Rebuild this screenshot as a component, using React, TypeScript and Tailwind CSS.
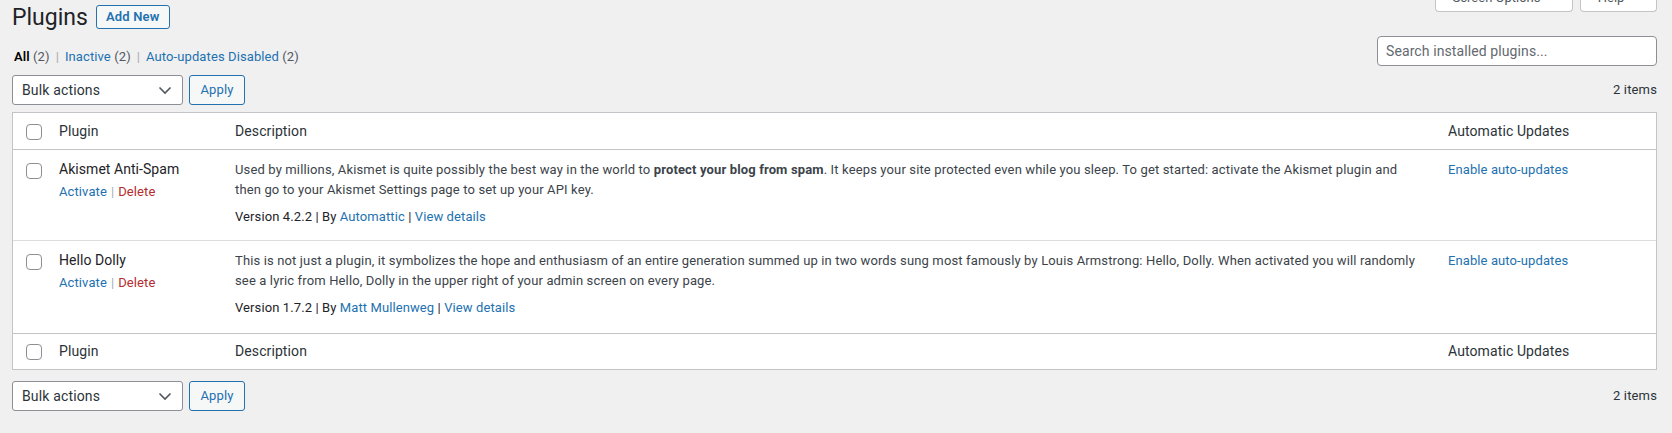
import React from "react";

interface Plugin {
  name: string;
  lines: React.ReactNode[];
  version: string;
  author: string;
  height: string;
  border: boolean;
}

const plugins: Plugin[] = [
  {
    name: "Akismet Anti-Spam",
    lines: [
      <>
        Used by millions, Akismet is quite possibly the best way in the world to{" "}
        <strong className="font-bold">protect your blog from spam</strong>. It keeps your site
        protected even while you sleep. To get started: activate the Akismet plugin and
      </>,
      <>then go to your Akismet Settings page to set up your API key.</>,
    ],
    version: "4.2.2",
    author: "Automattic",
    height: "h-[91px]",
    border: true,
  },
  {
    name: "Hello Dolly",
    lines: [
      <>
        This is not just a plugin, it symbolizes the hope and enthusiasm of an entire generation
        summed up in two words sung most famously by Louis Armstrong: Hello, Dolly. When activated
        you will randomly
      </>,
      <>see a lyric from Hello, Dolly in the upper right of your admin screen on every page.</>,
    ],
    version: "1.7.2",
    author: "Matt Mullenweg",
    height: "h-[92px]",
    border: false,
  },
];

const Checkbox = () => (
  <span className="block h-4 w-4 rounded-[4px] border border-[#8c8f94] bg-white" />
);

const Chevron = () => (
  <svg width="20" height="20" viewBox="0 0 20 20" fill="none">
    <path d="M4.5 7.5l5.5 5.5 5.5-5.5" stroke="#50575e" strokeWidth="1.6" />
  </svg>
);

const TableNav = () => (
  <div className="flex h-[30px] items-center justify-between">
    <div className="flex items-center gap-[6px]">
      <div className="flex h-[30px] w-[171px] items-center justify-between rounded-[3px] border border-[#8c8f94] bg-white pl-[9px] pr-[7px] text-[14px] tracking-[0.15px] text-[#2c3338]">
        <span>Bulk actions</span>
        <Chevron />
      </div>
      <button className="h-[30px] w-[56px] rounded-[3px] border border-[#2271b1] bg-[#f6f7f7] text-[13px] tracking-[0.15px] text-[#2271b1]">
        Apply
      </button>
    </div>
    <span className="text-[13px] tracking-[0.15px] text-[#2c3338]">2 items</span>
  </div>
);

const HeaderRow = ({ foot }: { foot?: boolean }) => (
  <div
    className={`grid grid-cols-[36px_176px_1fr_218px] text-[14px] tracking-[0.1px] text-[#2c3338] ${
      foot ? "h-[36px] border-t border-[#c3c4c7]" : "h-[37px] border-b border-[#c3c4c7]"
    }`}
  >
    <div className={`pl-[13px] ${foot ? "pt-[10px]" : "pt-[11px]"}`}>
      <Checkbox />
    </div>
    <div className="flex items-center px-[10px]">Plugin</div>
    <div className="flex items-center px-[10px]">Description</div>
    <div className="flex items-center px-[10px]">Automatic Updates</div>
  </div>
);

export default function App() {
  return (
    <div className="min-h-screen bg-[#f0f0f1] pl-[12px] pr-[15px] font-['Roboto',sans-serif] text-[13px] text-[#3c434a]">
      {/* Title + screen meta tabs */}
      <div className="flex items-start justify-between">
        <div className="flex h-[34px] items-center">
          <h1 className="text-[23px] font-normal leading-none text-[#1d2327]">Plugins</h1>
          <button className="ml-[8px] h-[24px] rounded-[3px] border border-[#2271b1] bg-[#f6f7f7] px-[9px] text-[13px] font-semibold tracking-[0.2px] text-[#2271b1]">
            Add New
          </button>
        </div>
        <div className="-mt-[16px] flex gap-[7px]">
          <div className="flex h-[28px] w-[138px] items-center justify-center gap-[6px] rounded-b-[4px] border border-t-0 border-[#c3c4c7] bg-white text-[13px] text-[#50575e]">
            Screen Options <span className="text-[9px]">▼</span>
          </div>
          <div className="flex h-[28px] w-[77px] items-center justify-center gap-[6px] rounded-b-[4px] border border-t-0 border-[#c3c4c7] bg-white text-[13px] text-[#50575e]">
            Help <span className="text-[9px]">▼</span>
          </div>
        </div>
      </div>

      {/* Filters + search */}
      <div className="flex items-start justify-between">
        <div className="mt-[10px] flex h-[26px] items-center text-[13px] tracking-[0.1px] text-[#50575e]">
          <span className="pl-[2px]">
            <span className="font-semibold text-black">All</span> (2)
          </span>
          <span className="mx-[6px] text-[#a7aaad]">|</span>
          <span>
            <span className="text-[#2271b1]">Inactive</span> (2)
          </span>
          <span className="mx-[6px] text-[#a7aaad]">|</span>
          <span>
            <span className="text-[#2271b1]">Auto-updates Disabled</span> (2)
          </span>
        </div>
        <div className="mt-[2px] flex h-[30px] w-[280px] items-center rounded-[4px] border border-[#8c8f94] bg-white px-[8px] text-[14px] tracking-[0.1px] text-[#646970]">
          Search installed plugins...
        </div>
      </div>

      <div className="mt-[5px]">
        <TableNav />
      </div>

      {/* Plugins table */}
      <div className="mt-[7px] border border-[#c3c4c7] bg-white">
        <HeaderRow />
        {plugins.map((p) => (
          <div
            key={p.name}
            className={`grid grid-cols-[36px_176px_1fr_218px] ${p.height} ${
              p.border ? "border-b border-[#dcdcde]" : ""
            }`}
          >
            <div className="pl-[13px] pt-[13px]">
              <Checkbox />
            </div>
            <div className="px-[10px] pt-[10px]">
              <div className="text-[14px] leading-[19.5px] tracking-[0.05px] text-[#1d2327]">
                {p.name}
              </div>
              <div className="pt-[2px] text-[13px] leading-[19.5px] tracking-[0.1px]">
                <span className="text-[#2271b1]">Activate</span>
                <span className="mx-[4px] text-[#a7aaad]">|</span>
                <span className="text-[#b32d2e]">Delete</span>
              </div>
            </div>
            <div className="min-w-0 px-[10px] pt-[10px] leading-[19.5px]">
              <div className="mb-[8px] text-[#3c434a]">
                {p.lines.map((line, i) => (
                  <div key={i} className="whitespace-nowrap tracking-[0.14px]">
                    {line}
                  </div>
                ))}
              </div>
              <p className="tracking-[0.1px] text-[#1d2327]">
                Version {p.version} | By <span className="text-[#2271b1]">{p.author}</span> |{" "}
                <span className="text-[#2271b1]">View details</span>
              </p>
            </div>
            <div className="px-[10px] pt-[10px] leading-[19.5px] tracking-[0.1px] text-[#2271b1]">
              Enable auto-updates
            </div>
          </div>
        ))}
        <HeaderRow foot />
      </div>

      <div className="mt-[11px] pb-[22px]">
        <TableNav />
      </div>
    </div>
  );
}
